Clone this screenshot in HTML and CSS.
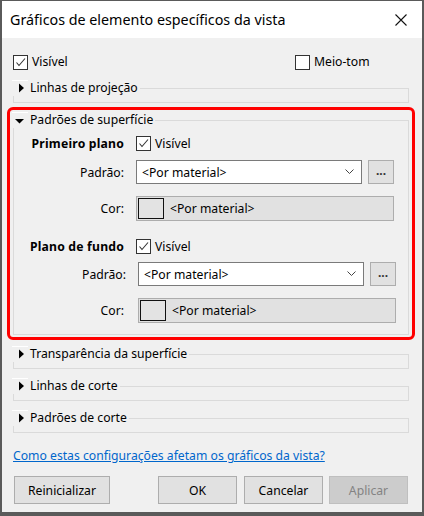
FILE: index.html
```html
<!DOCTYPE html>
<html lang="pt">
<head>
    <meta charset="UTF-8">
    <title>Gráficos de elemento específicos da vista</title>
    <link rel="stylesheet" href="styles.css">
</head>
<body>
    <div class="dialog">
        <div class="titlebar">
            <span class="title">Gráficos de elemento específicos da vista</span>
            <svg class="close" width="12" height="12" viewBox="0 0 12 12">
                <path d="M0.5 0.5L11.5 11.5M11.5 0.5L0.5 11.5" stroke="#111" stroke-width="1.1" fill="none"/>
            </svg>
        </div>

        <div class="content">
            <div class="top-row">
                <label class="check">
                    <span class="box"><svg width="13" height="13" viewBox="0 0 13 13"><path d="M2.5 6.5L5 9.5L11 2.5" stroke="#333" stroke-width="1.1" fill="none"/></svg></span>
                    Visível
                </label>
                <label class="check">
                    <span class="box"></span>
                    Meio-tom
                </label>
            </div>

            <fieldset class="group">
                <legend><span class="arrow"><svg width="16" height="16" viewBox="0 0 16 16"><path d="M7 3.5L12 8L7 12.5Z" fill="#000"/></svg></span>Linhas de projeção</legend>
            </fieldset>

            <div class="highlight">
                <fieldset class="group open">
                    <legend><span class="arrow"><svg width="16" height="16" viewBox="0 0 16 16"><path d="M3 7L12 7L7.5 11.5Z" fill="#000"/></svg></span>Padrões de superfície</legend>

                    <div class="layer">
                        <div class="row head">
                            <span class="label bold">Primeiro plano</span>
                            <label class="check">
                                <span class="box"><svg width="13" height="13" viewBox="0 0 13 13"><path d="M2.5 6.5L5 9.5L11 2.5" stroke="#333" stroke-width="1.1" fill="none"/></svg></span>
                                Visível
                            </label>
                        </div>
                        <div class="row pick">
                            <span class="label">Padrão:</span>
                            <div class="select">
                                <span>&lt;Por material&gt;</span>
                                <svg width="9" height="6" viewBox="0 0 9 6"><path d="M0.5 0.5L4.5 4.5L8.5 0.5" stroke="#444" stroke-width="1" fill="none"/></svg>
                            </div>
                            <button class="more">...</button>
                        </div>
                        <div class="row">
                            <span class="label">Cor:</span>
                            <div class="color"><span class="swatch"></span>&lt;Por material&gt;</div>
                        </div>
                    </div>

                    <div class="layer back">
                        <div class="row head">
                            <span class="label bold">Plano de fundo</span>
                            <label class="check">
                                <span class="box"><svg width="13" height="13" viewBox="0 0 13 13"><path d="M2.5 6.5L5 9.5L11 2.5" stroke="#333" stroke-width="1.1" fill="none"/></svg></span>
                                Visível
                            </label>
                        </div>
                        <div class="row pick">
                            <span class="label">Padrão:</span>
                            <div class="select">
                                <span>&lt;Por material&gt;</span>
                                <svg width="9" height="6" viewBox="0 0 9 6"><path d="M0.5 0.5L4.5 4.5L8.5 0.5" stroke="#444" stroke-width="1" fill="none"/></svg>
                            </div>
                            <button class="more">...</button>
                        </div>
                        <div class="row">
                            <span class="label">Cor:</span>
                            <div class="color"><span class="swatch"></span>&lt;Por material&gt;</div>
                        </div>
                    </div>
                </fieldset>
            </div>

            <fieldset class="group">
                <legend><span class="arrow"><svg width="16" height="16" viewBox="0 0 16 16"><path d="M7 3.5L12 8L7 12.5Z" fill="#000"/></svg></span>Transparência da superfície</legend>
            </fieldset>
            <fieldset class="group">
                <legend><span class="arrow"><svg width="16" height="16" viewBox="0 0 16 16"><path d="M7 3.5L12 8L7 12.5Z" fill="#000"/></svg></span>Linhas de corte</legend>
            </fieldset>
            <fieldset class="group">
                <legend><span class="arrow"><svg width="16" height="16" viewBox="0 0 16 16"><path d="M7 3.5L12 8L7 12.5Z" fill="#000"/></svg></span>Padrões de corte</legend>
            </fieldset>

            <a class="help-link" href="#">Como estas configurações afetam os gráficos da vista?</a>

            <div class="buttons">
                <button class="btn reset">Reinicializar</button>
                <button class="btn ok">OK</button>
                <button class="btn">Cancelar</button>
                <button class="btn" disabled>Aplicar</button>
            </div>
        </div>
    </div>
</body>
</html>
```

FILE: styles.css
```css
body {
    margin: 0;
    padding: 0;
    background-color: #ffffff;
    font-family: "Noto Sans", "Open Sans", sans-serif;
    font-size: 12.2px;
    color: #000;
}
.dialog {
    width: 424px;
    height: 516px;
    box-sizing: border-box;
    border: 2px solid #5a5a5a;
    border-top-width: 1px;
    border-bottom-width: 4px;
    background-color: #f0f0f0;
    display: flex;
    flex-direction: column;
}
.titlebar {
    height: 37px;
    background-color: #ffffff;
    display: flex;
    align-items: center;
    justify-content: space-between;
    padding: 0 15px 0 8px;
    flex-shrink: 0;
}
.titlebar .title {
    font-size: 14.3px;
    line-height: 20px;
    margin-top: 1px;
}
.titlebar .close {
    margin-top: 1px;
}
.content {
    flex: 1;
    padding: 16px 7px 0 5px;
}

/* checkboxes */
.check {
    display: flex;
    align-items: center;
    height: 16px;
    line-height: 16px;
}
.check .box {
    width: 15px;
    height: 15px;
    box-sizing: border-box;
    border: 1px solid #333;
    background-color: #ffffff;
    margin-right: 4px;
    display: flex;
    align-items: center;
    justify-content: center;
}
.top-row {
    display: grid;
    grid-template-columns: 282px auto;
    padding-left: 6px;
    margin-bottom: 10px;
}

/* collapsible groups */
.group {
    margin: 0 6px 9px 6px;
    padding: 0 0 6px 0;
    border: 1px solid #dadada;
    min-width: 0;
}
.group legend {
    margin-left: -2px;
    padding: 0 2px 0 0;
    line-height: 16px;
    height: 16px;
}
.group .arrow {
    display: inline-block;
    vertical-align: top;
    width: 16px;
    height: 16px;
    box-sizing: border-box;
    border-top: 1px solid #ffffff;
    margin-right: 2px;
}
.group .arrow svg {
    display: block;
    margin-top: -1px;
}
.highlight {
    border: 3px solid #ff0000;
    border-radius: 6px;
    padding: 2px 3px 2px 3px;
    margin-bottom: 6px;
    margin-top: -5px;
}
.highlight .group {
    margin: 0;
    padding-bottom: 11px;
}

/* open layer rows */
.layer {
    padding-top: 7px;
}
.layer.back {
    padding-top: 17px;
}
.row {
    display: flex;
    align-items: center;
    margin-bottom: 12px;
}
.row:last-child {
    margin-bottom: 0;
}
.row.head {
    margin-bottom: 8px;
}
.layer.back .row.head {
    margin-bottom: 7px;
}
.row .label {
    width: 110px;
    margin-right: 12px;
    text-align: right;
}
.row .label.bold {
    font-weight: bold;
    letter-spacing: 0.2px;
}
.select {
    width: 226px;
    height: 24px;
    box-sizing: border-box;
    border: 1px solid #7a7a7a;
    background-color: #ffffff;
    display: flex;
    align-items: center;
    justify-content: space-between;
    padding: 0 7px 0 5px;
}
.more {
    width: 26px;
    height: 24px;
    margin-left: 6px;
    padding: 0 0 4px 0;
    border: 1px solid #adadad;
    background-color: #e1e1e1;
    font-family: inherit;
    font-size: 12px;
    font-weight: bold;
    color: #333;
}
.color {
    width: 258px;
    height: 25px;
    box-sizing: border-box;
    border: 1px solid #adadad;
    background-color: #e1e1e1;
    display: flex;
    align-items: center;
    padding-left: 1px;
}
.color .swatch {
    width: 26px;
    height: 21px;
    box-sizing: border-box;
    border: 1px solid #111;
    background-color: #e3e3e3;
    margin-right: 6px;
}
.layer.back .pick,
.layer.back .color {
    margin-left: 2px;
}

.help-link {
    display: block;
    margin: 15px 0 0 6px;
    line-height: 16px;
    color: #0066cc;
}

.buttons {
    display: flex;
    margin-top: 12px;
    padding: 0 7px 0 7px;
}
.btn {
    width: 79px;
    height: 28px;
    border: 1px solid #adadad;
    background-color: #e1e1e1;
    font-family: inherit;
    font-size: 12.2px;
    color: #000;
    padding: 0;
    margin-left: 6px;
}
.btn.reset {
    width: 96px;
    margin-left: 0;
}
.btn.ok {
    margin-left: auto;
    margin-right: 1px;
}
.btn:disabled {
    background-color: #cccccc;
    border-color: #bfbfbf;
    color: #838383;
}
```
